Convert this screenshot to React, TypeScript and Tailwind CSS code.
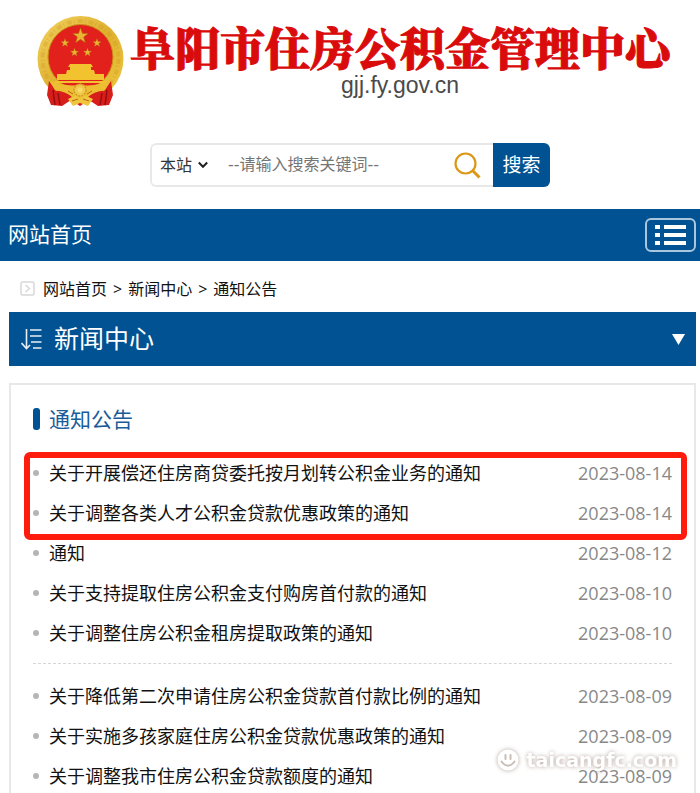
import { useState } from "react";

// ─── Data ───────────────────────────────────────────────────────────────────
const CRUMBS = ["网站首页", "新闻中心", "通知公告"];

const PINNED = [
  { title: "关于开展偿还住房商贷委托按月划转公积金业务的通知", date: "2023-08-14" },
  { title: "关于调整各类人才公积金贷款优惠政策的通知", date: "2023-08-14" },
];

const RECENT = [
  { title: "通知", date: "2023-08-12" },
  { title: "关于支持提取住房公积金支付购房首付款的通知", date: "2023-08-10" },
  { title: "关于调整住房公积金租房提取政策的通知", date: "2023-08-10" },
];

const OLDER = [
  { title: "关于降低第二次申请住房公积金贷款首付款比例的通知", date: "2023-08-09" },
  { title: "关于实施多孩家庭住房公积金贷款优惠政策的通知", date: "2023-08-09" },
  { title: "关于调整我市住房公积金贷款额度的通知", date: "2023-08-09" },
];

type Notice = { title: string; date: string };

const STAR = "M0-10 2.4-3.2 9.5-3.1 3.8 1.2 5.9 8.1 0 4-5.9 8.1-3.8 1.2-9.5-3.1-2.4-3.2Z";

function Emblem() {
  return (
    <svg className="w-[88px] shrink-0" viewBox="0 0 88 92" aria-hidden="true">
      <defs>
        <linearGradient id="gold" x1="0" y1="0" x2="1" y2="1">
          <stop offset="0" stopColor="#f3d462" />
          <stop offset="0.5" stopColor="#dfb02f" />
          <stop offset="1" stopColor="#efc83f" />
        </linearGradient>
      </defs>
      <circle cx="44.500" cy="44" r="43" fill="url(#gold)" />
      <circle cx="44.500" cy="44" r="38" fill="none" stroke="#c99420" strokeWidth="4" strokeDasharray="5 2 1 3" opacity="0.3" />
      <circle cx="44.500" cy="42" r="32.500" fill="#e2211c" stroke="#c98f17" strokeWidth="1" />
      {/* stars */}
      <g fill="#e9b430" stroke="#a9650f" strokeWidth="0.6">
        <path d={STAR} transform="translate(44.500 21) scale(0.82)" />
        <path d={STAR} transform="translate(29 28) scale(0.44)" />
        <path d={STAR} transform="translate(61 28) scale(0.44)" />
        <path d={STAR} transform="translate(38.500 37.500) scale(0.44)" />
        <path d={STAR} transform="translate(51.500 37.500) scale(0.44)" />
      </g>
      {/* gate tower */}
      <g fill="#f3c32f">
        <path d="M34 49h21l2 3H32Z" />
        <path d="M34 52h21v3H34ZM31 55h27l1 4H30Z" />
        <path d="M21 59h47v6H21ZM19 66h51v2H19Z" />
      </g>
      {/* drapery */}
      <path d="M13 66 20 76 34 74 44 84 54 74 68 76 75 66 77 80 73 90 62 91 53 85 44 91 35 85 26 91 15 90 11 80Z" fill="#d81e1b" />
      <path d="M17 75 19 90M22 78 24 90M71 75 69 90M66 78 64 90" stroke="#970d0d" strokeWidth="1.5" />
      <path d="M13 65Q27 72 44 70Q61 72 75 65L69 75Q57 77 52 82L44 87 36 82Q31 77 19 75Z" fill="#edbd32" />
      <path d="M32 84 40 80 44 84 48 80 57 84 52 91 44 88 37 91Z" fill="#f0c63f" />
      <circle cx="44" cy="75" r="6" fill="#f0c94b" stroke="#d39b22" strokeWidth="1.5" strokeDasharray="2 1" />
      <circle cx="44" cy="75" r="2.5" fill="#f8dc6a" />
      <path d="M32 76 37 79M56 76 51 79M36 86 42 84M53 86 47 84" stroke="#bd6613" strokeWidth="1" />
    </svg>
  );
}

function NoticeRow({ notice }: { notice: Notice }) {
  return (
    <li className="flex items-center text-[18px] leading-8">
      <span className="mr-[10px] size-[6px] shrink-0 rounded-full bg-[#b5b5b5]" />
      <a href="#" className="min-w-0 flex-1 truncate text-[#111]">{notice.title}</a>
      <time className="shrink-0 text-[#888]">{notice.date}</time>
    </li>
  );
}

export default function App() {
  const [scope, setScope] = useState("site");
  const [keyword, setKeyword] = useState("");

  return (
    <div className="relative flex min-h-screen flex-col overflow-hidden bg-white font-['Open_Sans','Noto_Sans_CJK_SC',sans-serif] text-[#111]">
      {/* Header */}
      <header className="flex items-start justify-center pt-[15px] pr-[30px] pl-[36px]">
        <Emblem />
        <div className="ml-[6px] flex flex-1 flex-col items-center pt-[6px] whitespace-nowrap">
          <h1 className="font-['Noto_Serif_CJK_SC','Noto_Sans_CJK_SC',serif] text-[45px] leading-[52px] font-black text-[#d90b0b] [-webkit-text-stroke:1px_#d90b0b]">
            阜阳市住房公积金管理中心
          </h1>
          <p className="font-['Liberation_Sans',sans-serif] text-[23px] leading-6 text-[#4a4a4a]">gjj.fy.gov.cn</p>
        </div>
      </header>

      {/* Search */}
      <form
        className="mx-auto mt-9 flex h-11 w-[400px] max-w-full translate-x-0 overflow-hidden rounded-md"
        onSubmit={e => e.preventDefault()}
      >
        <div className="flex min-w-0 flex-1 items-center rounded-l-md border-2 border-r-0 border-[#e8e8e8] pl-2">
          <div className="relative flex items-center">
            <select
              aria-label="搜索范围"
              value={scope}
              onChange={e => setScope(e.target.value)}
              className="w-[52px] appearance-none bg-transparent text-[16px] text-[#333] outline-none"
            >
              <option value="site">本站</option>
            </select>
            <svg className="pointer-events-none absolute right-1 w-[10px]" viewBox="0 0 10 8" fill="none" stroke="#222" strokeWidth="2">
              <path d="M0.8 1.5 5 5.8 9.2 1.5" />
            </svg>
          </div>
          <input
            type="text"
            aria-label="搜索关键词"
            placeholder="--请输入搜索关键词--"
            value={keyword}
            onChange={e => setKeyword(e.target.value)}
            className="ml-4 min-w-0 flex-1 font-['DejaVu_Sans','Noto_Sans_CJK_SC',sans-serif] text-[16px] outline-none placeholder:text-[#757575]"
          />
          <svg className="mr-3 w-[27px] shrink-0" viewBox="0 0 27 27" fill="none" stroke="#dc9815">
            <circle cx="11.500" cy="11.500" r="10" strokeWidth="2.2" />
            <path d="M18.500 18.500 25.500 25.500" strokeWidth="3" />
          </svg>
        </div>
        <button type="submit" className="w-[57px] bg-[#005293] text-[19px] text-white">搜索</button>
      </form>

      {/* Main nav */}
      <nav className="mt-[22px] flex h-[52px] items-center justify-between bg-[#005293] pr-1 pl-2">
        <a href="#" className="text-[21px] text-white">网站首页</a>
        <button type="button" aria-label="菜单" className="flex h-[34px] w-[51px] items-center justify-center rounded-md border-2 border-[#a9c6dd]">
          <svg className="w-[31px]" viewBox="0 0 31 20" fill="#fff">
            <path d="M0 0h5v4H0ZM9 0h22v4H9ZM0 8h5v4H0ZM9 8h22v4H9ZM0 16h5v4H0ZM9 16h22v4H9Z" />
          </svg>
        </button>
      </nav>

      {/* Breadcrumb */}
      <nav className="flex h-[51px] items-center pt-1 pl-5 text-[16px]">
        <svg className="mr-2 w-[15px]" viewBox="0 0 15 15" fill="none" stroke="#d8d8d8">
          <rect x="1" y="1" width="13" height="13" rx="1.5" strokeWidth="1.5" />
          <path d="M5.500 4 9.500 7.500 5.500 11" strokeWidth="1.5" />
        </svg>
        {CRUMBS.map((crumb, i) => (
          <span key={crumb} className="flex">
            {i > 0 && <span className="mx-[6px]">&gt;</span>}
            <a href="#">{crumb}</a>
          </span>
        ))}
      </nav>

      {/* Section bar */}
      <button type="button" className="mr-1 ml-[9px] flex h-[54px] items-center bg-[#005293] pr-[11px] pl-3 text-white">
        <svg className="mr-[12px] w-[21px]" viewBox="0 0 21 22" fill="none" stroke="#e6eef5" strokeWidth="1.6">
          <path d="M5.500 1V20M0.500 15 5.500 20.500 9 17M9 2H20.500M9 8H20.500M10 14H20.500M12 20H20.500" />
        </svg>
        <span className="text-[25px]">新闻中心</span>
        <svg className="ml-auto w-[13px]" viewBox="0 0 13 11" fill="#fff">
          <path d="M0 0h13L6.500 11Z" />
        </svg>
      </button>

      {/* Notices */}
      <main className="mt-[17px] mr-1 ml-[9px] flex-1 border-2 border-b-0 border-[#e8e8e8] px-[22px] pt-[18px]">
        <h2 className="flex items-center text-[21px] leading-8 text-[#1a5c99]">
          <span className="mr-[9px] h-[22px] w-[7px] rounded-[3px] bg-[#005293]" />
          通知公告
        </h2>
        <ul className="relative mt-[22px] flex flex-col gap-2">
          {PINNED.map(n => <NoticeRow key={n.title} notice={n} />)}
          <li aria-hidden="true" className="pointer-events-none absolute -top-[5px] -right-[15px] -bottom-[11px] -left-[9px] rounded-md border-[6px] border-[#ff1c0d]" />
        </ul>
        <ul className="mt-2 flex flex-col gap-2 border-b border-dashed border-[#d6d6d6] pb-[14px]">
          {RECENT.map(n => <NoticeRow key={n.title} notice={n} />)}
        </ul>
        <ul className="mt-4 flex flex-col gap-2">
          {OLDER.map(n => <NoticeRow key={n.title} notice={n} />)}
        </ul>
      </main>

      {/* Watermark */}
      <div className="pointer-events-none absolute right-[23px] bottom-[21px] flex items-center gap-2 text-white drop-shadow-[0_0_2px_#b5a49c]">
        <svg className="w-[22px]" viewBox="0 0 22 22" fill="none">
          <circle cx="11" cy="11" r="10.500" fill="#fff" />
          <path d="M8.500 6v4M13.500 6v4M4.500 12.500Q11 21 17.500 12.500" stroke="#c9bdb7" strokeWidth="2" strokeLinecap="round" />
        </svg>
        <span className="font-['DejaVu_Sans',sans-serif] text-[19px] leading-6 font-bold">taicangfc.com</span>
      </div>
    </div>
  );
}
